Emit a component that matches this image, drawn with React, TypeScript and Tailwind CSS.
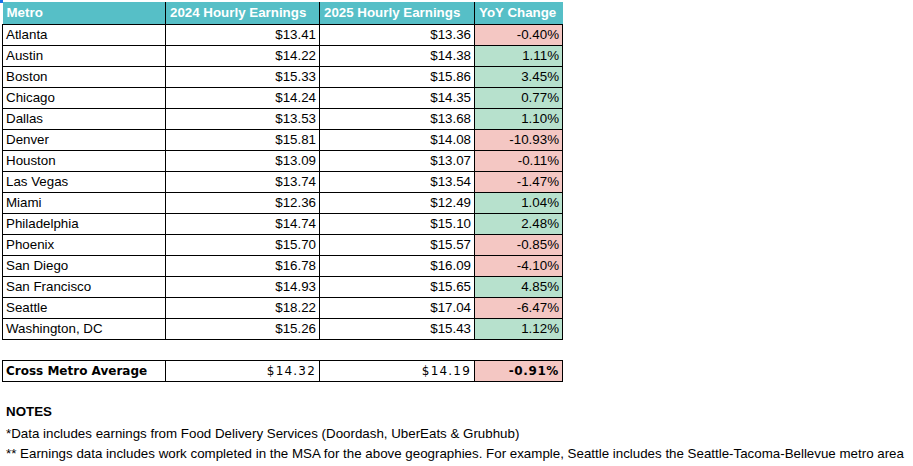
import React from 'react';

type Row = { metro: string; y24: string; y25: string; yoy: string; up: boolean };

const rows: Row[] = [
  { metro: 'Atlanta', y24: '$13.41', y25: '$13.36', yoy: '-0.40%', up: false },
  { metro: 'Austin', y24: '$14.22', y25: '$14.38', yoy: '1.11%', up: true },
  { metro: 'Boston', y24: '$15.33', y25: '$15.86', yoy: '3.45%', up: true },
  { metro: 'Chicago', y24: '$14.24', y25: '$14.35', yoy: '0.77%', up: true },
  { metro: 'Dallas', y24: '$13.53', y25: '$13.68', yoy: '1.10%', up: true },
  { metro: 'Denver', y24: '$15.81', y25: '$14.08', yoy: '-10.93%', up: false },
  { metro: 'Houston', y24: '$13.09', y25: '$13.07', yoy: '-0.11%', up: false },
  { metro: 'Las Vegas', y24: '$13.74', y25: '$13.54', yoy: '-1.47%', up: false },
  { metro: 'Miami', y24: '$12.36', y25: '$12.49', yoy: '1.04%', up: true },
  { metro: 'Philadelphia', y24: '$14.74', y25: '$15.10', yoy: '2.48%', up: true },
  { metro: 'Phoenix', y24: '$15.70', y25: '$15.57', yoy: '-0.85%', up: false },
  { metro: 'San Diego', y24: '$16.78', y25: '$16.09', yoy: '-4.10%', up: false },
  { metro: 'San Francisco', y24: '$14.93', y25: '$15.65', yoy: '4.85%', up: true },
  { metro: 'Seattle', y24: '$18.22', y25: '$17.04', yoy: '-6.47%', up: false },
  { metro: 'Washington, DC', y24: '$15.26', y25: '$15.43', yoy: '1.12%', up: true },
];

const cell = 'h-[21px] border border-black px-[3px] p-0 leading-none';
const head = 'h-[22px] border-b border-black px-[4px] text-left';

export default function App() {
  return (
    <div className="relative min-h-[466px] w-[913px] bg-white pl-[2px] pt-[2px] text-[13.33px] text-black" style={{ fontFamily: '"Liberation Sans", Arial, sans-serif' }}>
      <div className="absolute left-0 top-0 h-[3px] w-[3px] bg-[#1a73e8]" />
      <table className="w-[560px] table-fixed border-collapse">
        <colgroup>
          <col className="w-[163px]" />
          <col className="w-[154px]" />
          <col className="w-[155px]" />
          <col className="w-[88px]" />
        </colgroup>
        <thead>
          <tr className="bg-[#56bfc7] font-bold text-white">
            <th className={`${head} border-r`}>Metro</th>
            <th className={`${head} border-r`}>2024 Hourly Earnings</th>
            <th className={`${head} border-r`}>2025 Hourly Earnings</th>
            <th className={head}>YoY Change</th>
          </tr>
        </thead>
        <tbody>
          {rows.map((r) => (
            <tr key={r.metro}>
              <td className={`${cell} text-left`}>{r.metro}</td>
              <td className={`${cell} text-right`}>{r.y24}</td>
              <td className={`${cell} text-right`}>{r.y25}</td>
              <td className={`${cell} text-right ${r.up ? 'bg-[#b7e1cd]' : 'bg-[#f4c7c3]'}`}>{r.yoy}</td>
            </tr>
          ))}
          <tr>
            <td colSpan={4} className="h-[21px] p-0" />
          </tr>
          <tr className="text-[12px]" style={{ fontFamily: '"DejaVu Sans", Verdana, sans-serif' }}>
            <td className={`${cell} text-left font-bold`}>Cross Metro Average</td>
            <td className={`${cell} text-right tracking-[1.2px]`}>$14.32</td>
            <td className={`${cell} text-right tracking-[1.2px]`}>$14.19</td>
            <td className={`${cell} bg-[#f4c7c3] text-right font-bold tracking-[0.6px]`}>-0.91%</td>
          </tr>
        </tbody>
      </table>
      <div className="mt-[20px] flex flex-col pl-[4px]">
        <div className="h-[22px] leading-[20px] font-bold">NOTES</div>
        <div className="h-[20px] leading-[20px]">*Data includes earnings from Food Delivery Services (Doordash, UberEats &amp; Grubhub)</div>
        <div className="h-[20px] leading-[20px]">** Earnings data includes work completed in the MSA for the above geographies. For example, Seattle includes the Seattle-Tacoma-Bellevue metro area</div>
      </div>
    </div>
  );
}
